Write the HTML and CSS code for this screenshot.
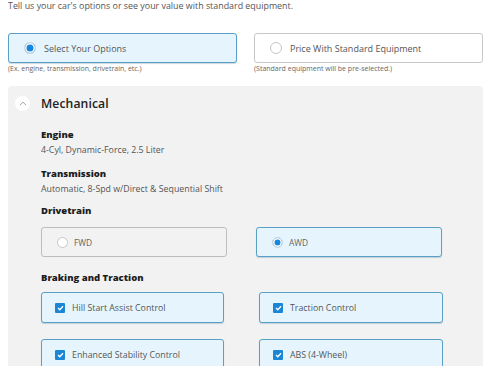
FILE: index.html
```html
<!DOCTYPE html>
<html>
<head>
<meta charset="utf-8">
<link rel="stylesheet" href="styles.css">
</head>
<body>
<p class="intro">Tell us your car's options or see your value with standard equipment.</p>
<div class="choices">
  <div class="choice">
    <label class="opt opt-on"><span class="radio radio-on"></span>Select Your Options</label>
    <p class="hint">(Ex. engine, transmission, drivetrain, etc.)</p>
  </div>
  <div class="choice">
    <label class="opt"><span class="radio"></span>Price With Standard Equipment</label>
    <p class="hint">(Standard equipment will be pre-selected.)</p>
  </div>
</div>
<section class="panel">
  <div class="panel-head">
    <span class="chev"><svg width="8" height="5" viewBox="0 0 8 5"><path d="M0.8 4.3 L4 1.2 L7.2 4.3" fill="none" stroke="#9aa3ab" stroke-width="1"/></svg></span>
    <h2>Mechanical</h2>
  </div>
  <div class="body">
    <h3 class="lbl lbl-engine">Engine</h3>
    <p class="val">4-Cyl, Dynamic-Force, 2.5 Liter</p>
    <h3 class="lbl lbl-trans">Transmission</h3>
    <p class="val">Automatic, 8-Spd w/Direct &amp; Sequential Shift</p>
    <h3 class="lbl lbl-drive">Drivetrain</h3>
    <div class="grid grid-drive">
      <div class="box"><span class="radio sm"></span>FWD</div>
      <div class="box box-on"><span class="radio sm radio-on"></span>AWD</div>
    </div>
    <h3 class="lbl lbl-brake">Braking and Traction</h3>
    <div class="grid grid-check">
      <div class="box box-on cbx"><span class="check"><svg width="7" height="6" viewBox="0 0 7 6"><path d="M1 3 L2.8 4.8 L6 1.2" fill="none" stroke="#fff" stroke-width="1.3"/></svg></span>Hill Start Assist Control</div>
      <div class="box box-on cbx"><span class="check"><svg width="7" height="6" viewBox="0 0 7 6"><path d="M1 3 L2.8 4.8 L6 1.2" fill="none" stroke="#fff" stroke-width="1.3"/></svg></span>Traction Control</div>
      <div class="box box-on cbx"><span class="check"><svg width="7" height="6" viewBox="0 0 7 6"><path d="M1 3 L2.8 4.8 L6 1.2" fill="none" stroke="#fff" stroke-width="1.3"/></svg></span>Enhanced Stability Control</div>
      <div class="box box-on cbx"><span class="check"><svg width="7" height="6" viewBox="0 0 7 6"><path d="M1 3 L2.8 4.8 L6 1.2" fill="none" stroke="#fff" stroke-width="1.3"/></svg></span>ABS (4-Wheel)</div>
    </div>
  </div>
</section>
</body>
</html>
```
FILE: styles.css
```css
* { box-sizing: border-box; }
html, body { margin: 0; padding: 0; background: #fff; overflow: hidden; }
body {
  width: 488px;
  height: 366px;
  padding: 0 5px 0 8px;
  font-family: "Open Sans", "Liberation Sans", sans-serif;
  color: #555;
}
.intro {
  margin: 0;
  font-size: 8.9px;
  line-height: 12px;
  color: #555;
}
.choices {
  display: grid;
  grid-template-columns: 229px 229px;
  column-gap: 17px;
  margin-top: 21px;
}
.opt {
  display: flex;
  align-items: center;
  height: 30px;
  padding-left: 15px;
  border: 1px solid #c8c8c8;
  border-radius: 3px;
  background: #fff;
  font-size: 9px;
  color: #555;
}
.opt-on {
  background: #e6f5fd;
  border-color: #5aa0c6;
  box-shadow: 0 1px 1px rgba(40,100,140,0.25);
}
.radio {
  width: 12px;
  height: 12px;
  border-radius: 50%;
  border: 1px solid #c6c6c6;
  background: #fff;
  margin-right: 8px;
  flex: none;
}
.radio-on {
  background: #1787dd;
  border: 1px solid #d0dce4;
  box-shadow: inset 0 0 0 1.5px #fff;
}
.hint {
  margin: 2px 0 0 0;
  font-size: 7px;
  line-height: 8px;
  color: #666;
}
.panel {
  margin-top: 13px;
  width: 475px;
  height: 300px;
  background: #f2f2f2;
  border-radius: 4px;
  padding: 10px 0 0 7px;
}
.panel-head {
  display: flex;
  align-items: center;
  height: 15px;
}
.chev {
  width: 15px;
  height: 15px;
  border-radius: 50%;
  background: #fff;
  display: flex;
  align-items: center;
  justify-content: center;
  margin-right: 11px;
}
.chev svg { margin-top: -1px; }
.panel-head h2 {
  margin: 0;
  font-size: 12.2px;
  font-weight: 600;
  color: #222;
  letter-spacing: 0.1px;
}
.body {
  padding-left: 26px;
  padding-top: 18px;
}
.lbl {
  margin: 0;
  font-size: 9.5px;
  line-height: 12px;
  font-weight: 800;
  color: #1d1d1d;
}
.val {
  margin: 3px 0 0 0;
  font-size: 8.8px;
  line-height: 12px;
  color: #555;
}
.lbl-trans { margin-top: 12px; }
.lbl-drive { margin-top: 10px; }
.grid {
  display: grid;
}
.grid-drive {
  grid-template-columns: 186px 186px;
  column-gap: 29px;
  margin-top: 10px;
}
.lbl-brake { margin-top: 15px; }
.grid-check {
  grid-template-columns: 183px 184px;
  column-gap: 35px;
  row-gap: 16px;
  margin-top: 8px;
}
.box {
  display: flex;
  align-items: center;
  height: 30px;
  padding-left: 15px;
  border: 1px solid #bdbdbd;
  border-radius: 3px;
  background: #f2f2f2;
  font-size: 8.4px;
  color: #666;
}
.box-on {
  background: #e6f5fd;
  border-color: #5aa0c6;
  box-shadow: 0 1px 1px rgba(40,100,140,0.25);
}
.radio.sm {
  width: 11px;
  height: 11px;
  margin-right: 6px;
}
.cbx {
  height: 31px;
  padding-left: 13px;
  font-size: 8.8px;
  color: #555;
}
.check {
  width: 10px;
  height: 10px;
  background: #1b86d6;
  border-radius: 1px;
  display: flex;
  align-items: center;
  justify-content: center;
  margin-right: 7px;
  flex: none;
}
```
